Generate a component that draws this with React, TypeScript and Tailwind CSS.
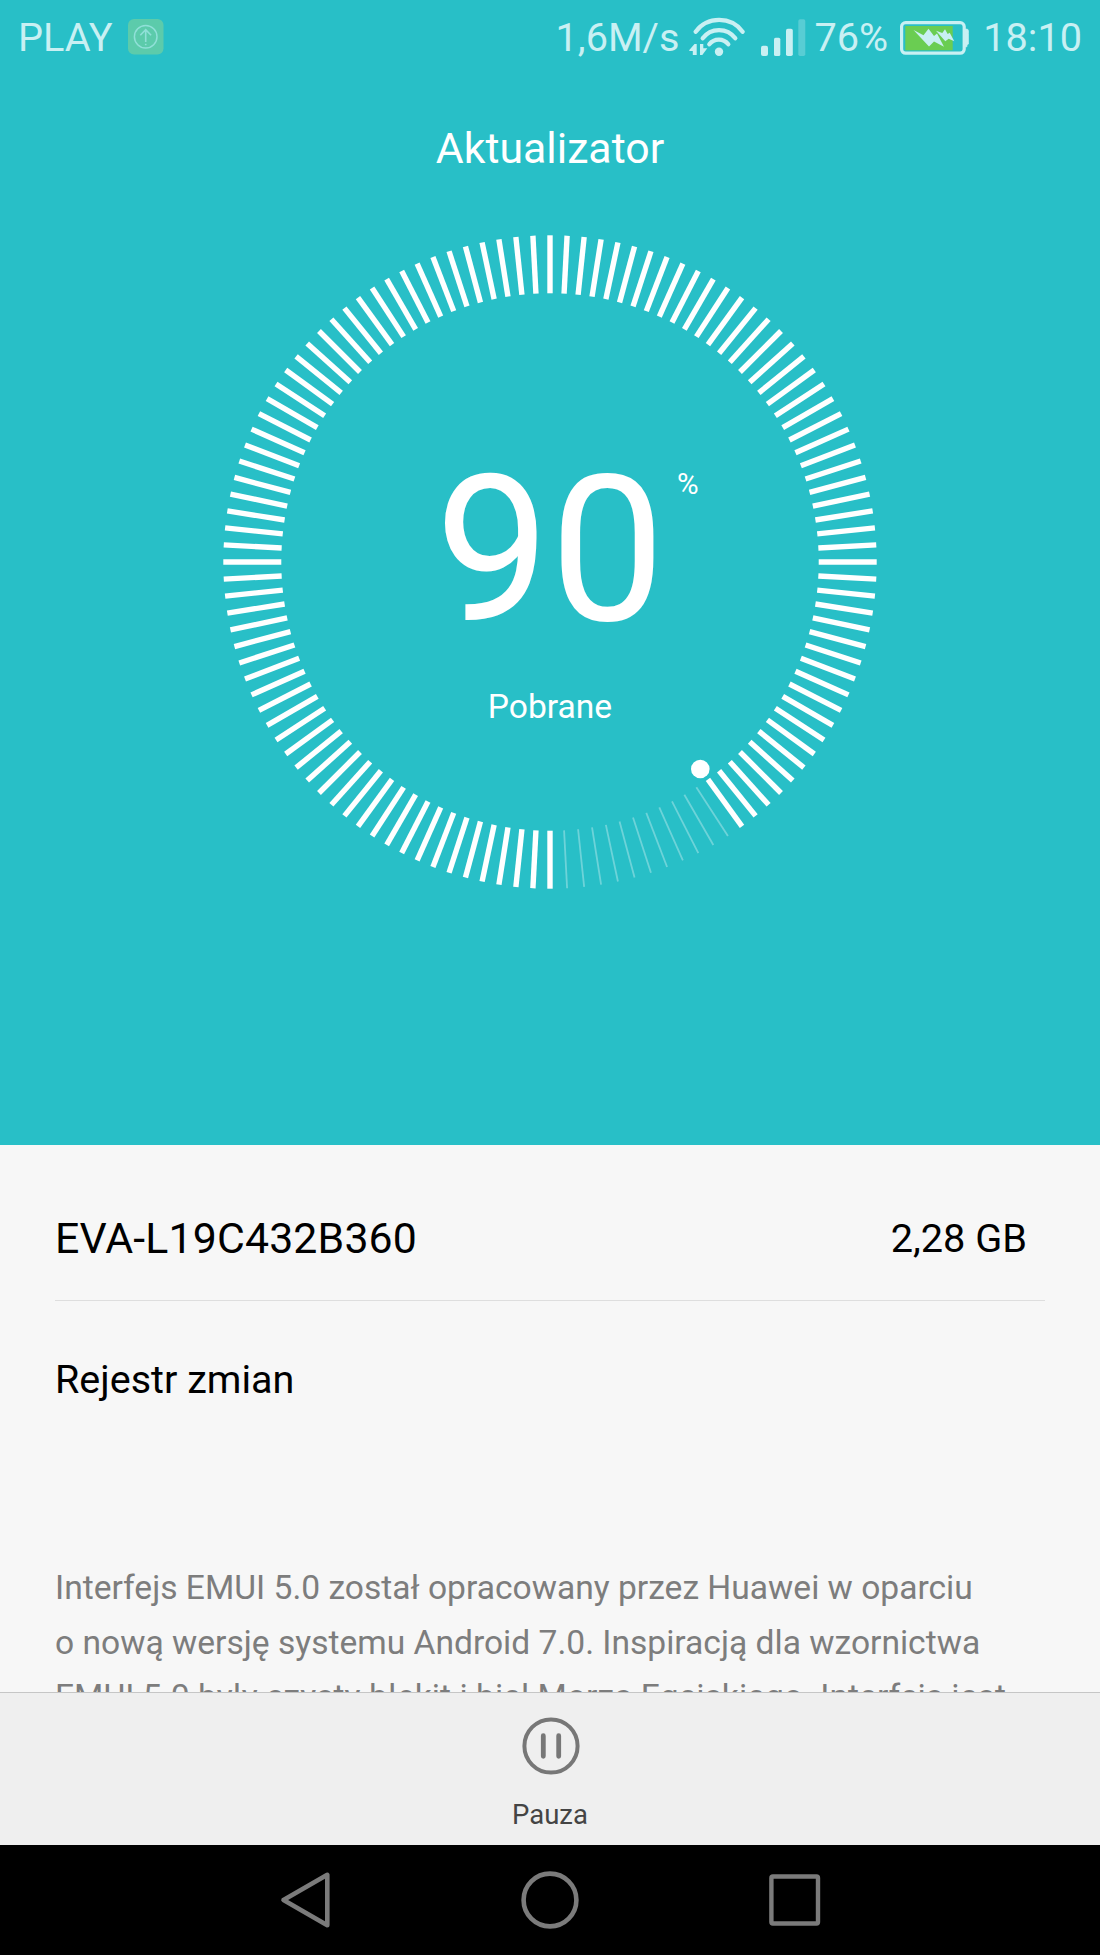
const TICK_COUNT = 120;
const PROGRESS = 90;

function UpdateBadge() {
  return (
    <svg width="36" height="36" viewBox="0 0 36 36" fill="none" className="text-[#90e0d8]">
      <rect width="35.5" height="35.5" rx="6" fill="#5ccbab" />
      <circle cx="17.7" cy="17.8" r="11.3" stroke="currentColor" strokeWidth="1.5" />
      <path d="M17.7 23V11M12.3 16.2l5.4-5.6 5.4 5.6" stroke="currentColor" strokeWidth="1.6" />
      <path d="M17.7 24.8v1.4" stroke="currentColor" strokeWidth="1.6" />
    </svg>
  );
}

function WifiIcon() {
  return (
    <svg width="56" height="40" viewBox="0 0 56 40" fill="none">
      <g stroke="currentColor" strokeWidth="4.3" strokeLinecap="round">
        <path d="M6.7 14.7A29.3 29.3 0 0 1 53.6 14.7" />
        <path d="M13.7 21.3A20.2 20.2 0 0 1 46.3 21.3" />
        <path d="M20.3 27.3A12 12 0 0 1 39.3 27.3" />
      </g>
      <circle cx="30" cy="34.7" r="4.2" fill="currentColor" />
      <path d="M.3 33 5.5 27h2.2v11H3.8v-4H.3z" fill="currentColor" />
      <path d="M11 27h3.3v4.3h4L13.3 38H11z" fill="currentColor" />
    </svg>
  );
}

function SignalIcon() {
  return (
    <svg width="45" height="37" viewBox="0 0 45 37" fill="currentColor">
      <rect x="0" y="26.8" width="7" height="10.2" rx="2" />
      <rect x="13" y="18.7" width="6.3" height="18.3" rx="1.6" />
      <rect x="25" y="9.7" width="6.8" height="27.3" rx="1.8" />
      <rect x="37.3" y="0.3" width="7" height="36.7" rx="1.8" opacity="0.3" />
    </svg>
  );
}

function BatteryIcon() {
  return (
    <svg width="69" height="34" viewBox="0 0 69 34" fill="none">
      <rect x="5.3" y="5" width="47.4" height="24.3" fill="#6acd52" />
      <rect x="1.6" y="1.6" width="62.6" height="30.6" rx="4" stroke="currentColor" strokeWidth="3.2" />
      <path d="M65 8h1.5a2 2 0 0 1 2 2v2.5V23l-1.5 1v1.8h-2z" fill="currentColor" stroke="currentColor" strokeWidth=".6" />
      <path d="M13.5 9 23.5 14.3 28.5 7.7 34 15l3-2.5 7 13.2-10-5.2-5 5z" fill="currentColor" />
      <path d="m36 9.7 6.3 2.3L45 8.3l2.7 4.7 2-1.3 4.6 8.6-5.6-2.6-3.4 2.6z" fill="currentColor" />
    </svg>
  );
}

function StatusBar() {
  return (
    <div className="flex h-[76px] items-center pr-[18px] pl-[18px] text-[39.7px] text-[#c9f0f3]">
      <span>PLAY</span>
      <div className="mb-[2px] ml-[15px]">
        <UpdateBadge />
      </div>
      <span className="ml-auto">1,6M/s</span>
      <div className="mb-[2px] ml-[10px]">
        <WifiIcon />
      </div>
      <div className="mb-[2px] ml-4">
        <SignalIcon />
      </div>
      <span className="ml-[8px]">76%</span>
      <div className="ml-[12px]">
        <BatteryIcon />
      </div>
      <span className="ml-[14px]">18:10</span>
    </div>
  );
}

function ProgressRing() {
  // Ticks run clockwise from six o'clock
  const done = Math.round((TICK_COUNT * PROGRESS) / 100);
  return (
    <svg width="660" height="660" viewBox="-330 -330 660 660" className="col-start-1 row-start-1">
      {Array.from({ length: TICK_COUNT }, (_, i) => {
        const filled = i <= done;
        return (
          <line
            key={i}
            x1="0"
            x2="0"
            y1="268.7"
            y2="326.7"
            stroke="#fff"
            strokeWidth={filled ? 5.4 : 1.8}
            opacity={filled ? 1 : 0.32}
            transform={`rotate(${(i * 360) / TICK_COUNT})`}
          />
        );
      })}
      <circle cx="150.3" cy="207" r="9.3" fill="#fff" />
    </svg>
  );
}

function Header() {
  return (
    <header className="flex h-[1145px] flex-col bg-[#28bfc7] text-white">
      <StatusBar />
      <h1 className="mt-8 text-center text-[42.8px] leading-[80px]">Aktualizator</h1>
      <div className="mt-11 grid justify-center">
        <ProgressRing />
        <div className="col-start-1 row-start-1 flex flex-col items-center pt-[214px]">
          <div className="relative text-[204.5px] leading-[208px]">
            {PROGRESS}
            <span className="absolute top-[21px] left-[242px] text-[29.5px] leading-[34px]">%</span>
          </div>
          <div className="mt-[33px] text-[33.6px] leading-[40px]">Pobrane</div>
        </div>
      </div>
    </header>
  );
}

function Details() {
  return (
    <main className="h-[547px] overflow-hidden bg-[#f7f7f7] px-[55px] pt-[34px] text-black">
      <div className="flex h-[122px] items-center justify-between border-b border-[#dedede] pr-[18px] pb-[2px]">
        <span className="text-[42.8px] tracking-[0.15px]">EVA-L19C432B360</span>
        <span className="text-[39.7px]">2,28 GB</span>
      </div>
      <h2 className="mt-[54px] text-[39.5px] leading-[50px]">Rejestr zmian</h2>
      <p className="mt-[156px] text-[33.6px] leading-[54.7px] whitespace-nowrap text-[#7d7d7d]">
        Interfejs EMUI 5.0 został opracowany przez Huawei w oparciu
        <br />
        o nową wersję systemu Android <span className="[font-kerning:none]">7.0.</span> Inspiracją dla wzornictwa
        <br />
        <span className="tracking-[0.04px]">EMUI 5.0 były czysty błękit i biel Morza Egejskiego. Interfejs jest</span>
      </p>
    </main>
  );
}

function PauseBar() {
  return (
    <button className="flex h-[153px] w-full flex-col items-center border-t border-[#c6c6c6] bg-[#efefef] pt-[23px] text-[#444]">
      <svg width="60" height="60" viewBox="-30 -30 60 60" fill="none" stroke="#777" className="ml-[2px]">
        <circle r="26.6" strokeWidth="4" />
        <path d="M-7.7 -10.3V10.3M7.7 -10.3V10.3" strokeWidth="4.8" strokeLinecap="round" />
      </svg>
      <span className="mt-[19px] text-[27.5px] leading-[40px]">Pauza</span>
    </button>
  );
}

function NavBar() {
  return (
    <nav className="grid h-[110px] grid-cols-[245px_245px_245px] place-items-center justify-center bg-black text-[#7b7b7b]">
      <svg width="60" height="60" viewBox="-30 -30 60 60" fill="none" stroke="currentColor" strokeWidth="4.6" strokeLinejoin="round">
        <path d="M-21.5 0 22.3 -25.2V25.2z" />
      </svg>
      <svg width="60" height="60" viewBox="-30 -30 60 60" fill="none" stroke="currentColor" strokeWidth="4.6">
        <circle r="26.4" />
      </svg>
      <svg width="60" height="60" viewBox="-30 -30 60 60" fill="none" stroke="currentColor" strokeWidth="4.4">
        <rect x="-23.6" y="-23.5" width="46.6" height="47" rx="1.5" />
      </svg>
    </nav>
  );
}

export default function App() {
  return (
    <div className="flex h-[1955px] w-[1100px] flex-col overflow-hidden bg-black font-[Roboto,sans-serif]">
      <Header />
      <Details />
      <PauseBar />
      <NavBar />
    </div>
  );
}
